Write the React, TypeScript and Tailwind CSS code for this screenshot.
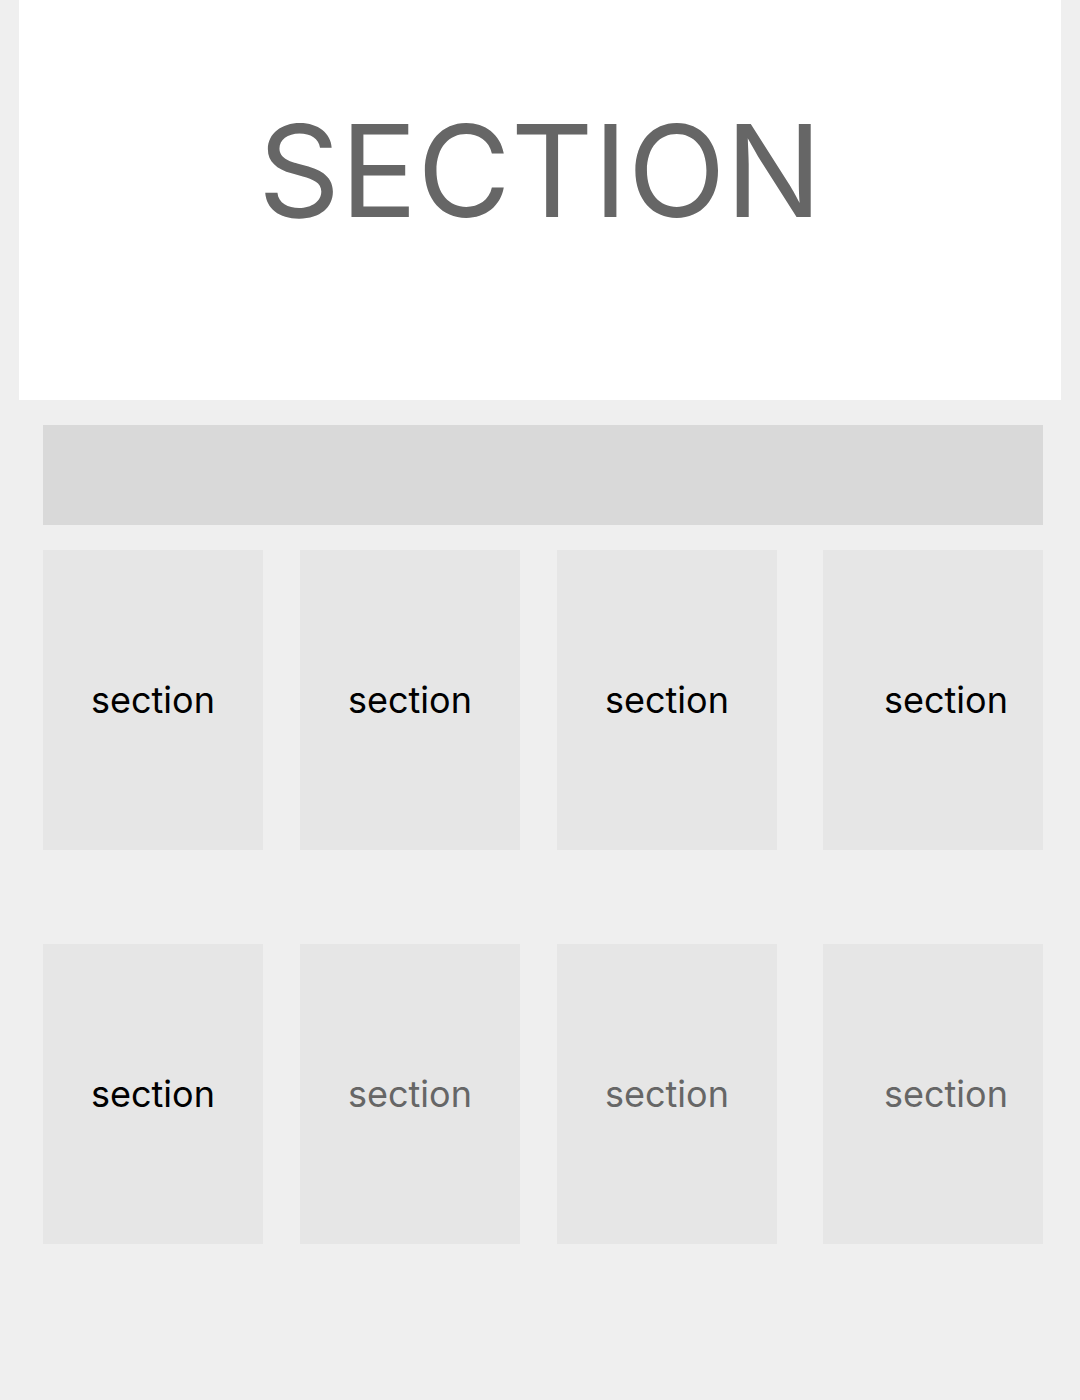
import React from "react";

const Card = ({ muted, shift }: { muted?: boolean; shift?: boolean }) => (
  <div
    className={`w-[220px] h-[300px] bg-[#e6e6e6] flex items-center justify-center ${shift ? "pl-[26px]" : ""}`}
  >
    <span className={`text-[36px] leading-none ${muted ? "text-[#666666]" : "text-black"}`}>section</span>
  </div>
);

export default function App() {
  return (
    <div className="min-h-[1400px] w-[1080px] bg-[#efefef] font-['Inter','Liberation_Sans',sans-serif]">
      <div className="mx-[19px] h-[400px] bg-white flex justify-center pt-[107px]">
        <h1 className="text-[128px] leading-[128px] text-[#666666] font-normal">SECTION</h1>
      </div>
      <div className="ml-[43px] w-[1000px] pt-[25px]">
        <div className="h-[100px] bg-[#d9d9d9]" />
        <div className="mt-[25px] flex">
          <Card />
          <div className="w-[37px]" />
          <Card />
          <div className="w-[37px]" />
          <Card />
          <div className="w-[46px]" />
          <Card shift />
        </div>
        <div className="mt-[94px] flex">
          <Card />
          <div className="w-[37px]" />
          <Card muted />
          <div className="w-[37px]" />
          <Card muted />
          <div className="w-[46px]" />
          <Card muted shift />
        </div>
      </div>
    </div>
  );
}
